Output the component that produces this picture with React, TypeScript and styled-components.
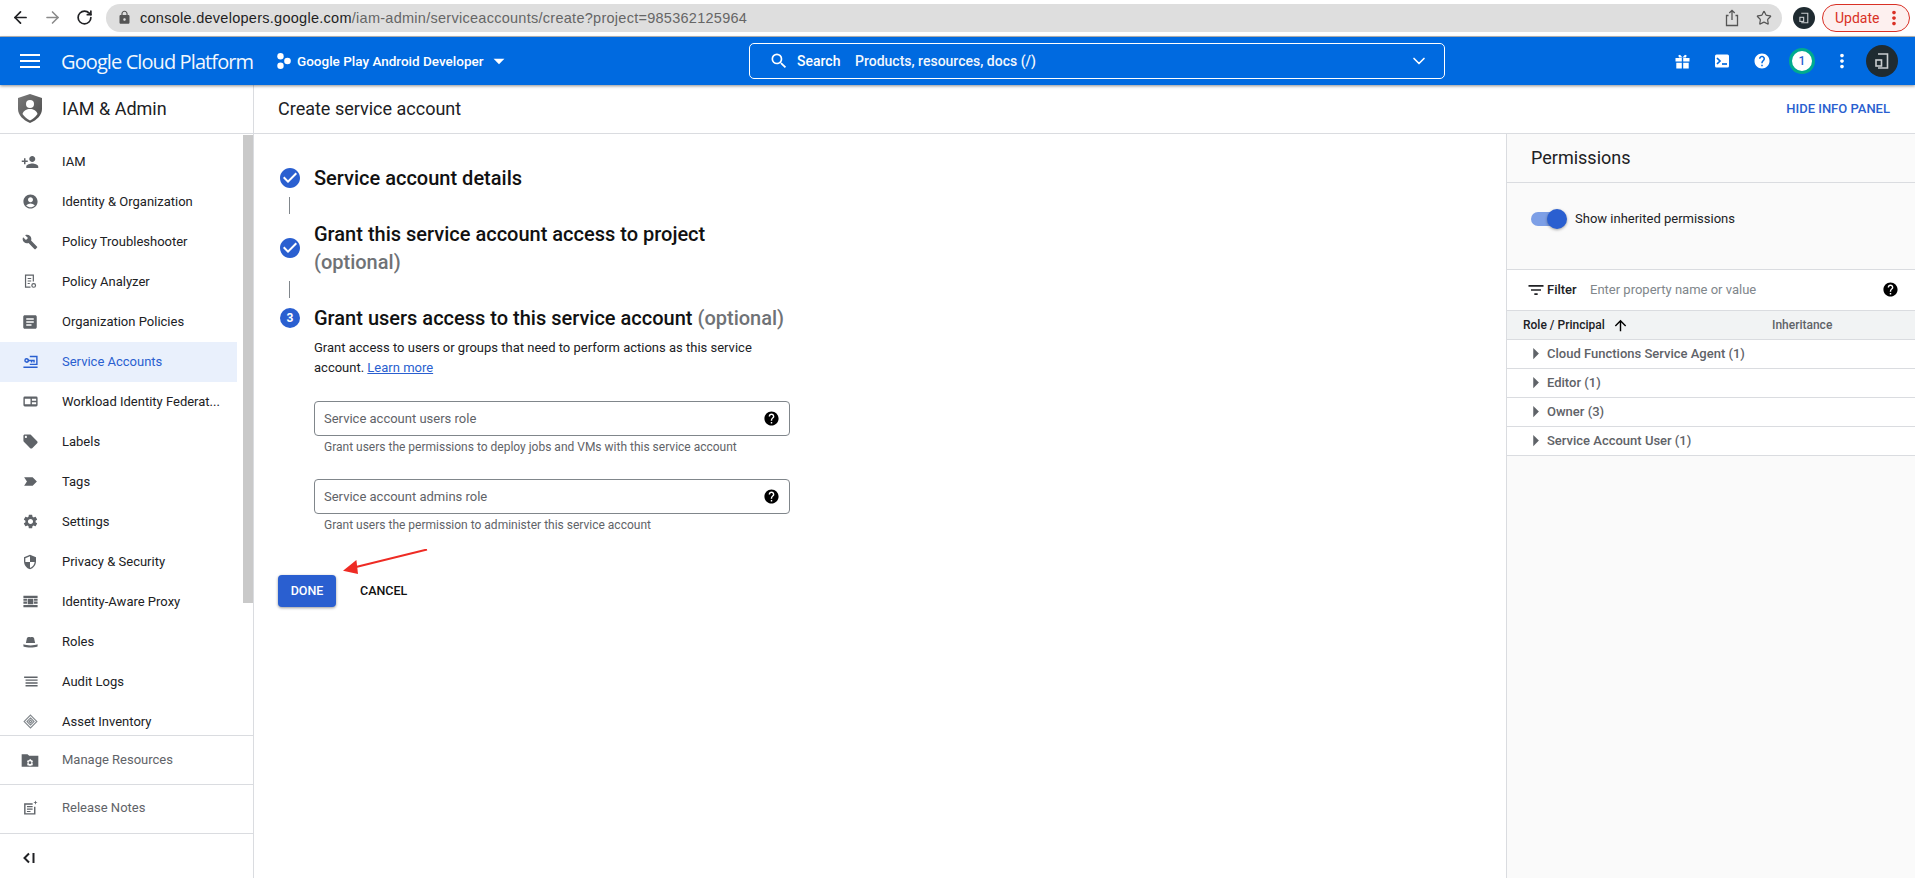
import React from 'react'
import styled, { createGlobalStyle } from 'styled-components'
import { ArrowLeft, ArrowRight, RotateCw, Star, ChevronDown } from 'lucide-react'
import {
  MdPersonAdd, MdAccountCircle, MdBuild, MdArticle, MdLocalOffer, MdSettings, MdSecurity,
  MdSearch, MdHelp, MdMoreVert, MdArrowDropDown, MdCheckCircle, MdFilterList,
  MdArrowUpward, MdArrowRight, MdLock,
} from 'react-icons/md'

const BLUE = '#2a5fd0'
const BAR = '#006ae0'

const GlobalStyle = createGlobalStyle`
  html, body { margin: 0; padding: 0; background: #fff; }
  body { font-family: Roboto, "Liberation Sans", sans-serif; color: #000; }
  * { box-sizing: border-box; }
`

const Page = styled.div`
  width: 1915px;
  height: 878px;
  display: flex;
  flex-direction: column;
  overflow: hidden;
`

/* browser chrome */
const Chrome = styled.div`
  height: 37px;
  flex: none;
  display: flex;
  align-items: center;
  padding: 0 5px 1px 4px;
  background: #fff;
  border-bottom: 1px solid #b9b9b9;
`
const NavBtn = styled.div<{ $dim?: boolean }>`
  width: 32px;
  display: flex;
  justify-content: center;
  color: ${p => (p.$dim ? '#8a8a8a' : '#202124')};
`
const UrlPill = styled.div`
  width: 1676px;
  height: 28px;
  margin-left: 6px;
  border-radius: 14px;
  background: #dedede;
  display: flex;
  align-items: center;
  padding: 0 2px 0 11px;
  color: #5b5b5b;
  font: 14.5px "Liberation Sans", Arial, sans-serif;
  letter-spacing: 0.27px;
`
const UrlText = styled.span`
  margin-left: 8px;
  flex: 1;
  color: #666;
  b { font-weight: 400; color: #1f1f1f; }
`
const PillIcon = styled.div`
  width: 32px;
  display: flex;
  justify-content: center;
  color: #555;
`
const ChromeAvatar = styled.div`
  width: 22px;
  height: 22px;
  margin-left: 11px;
  display: flex;
`
const UpdatePill = styled.div`
  width: 88px;
  height: 28px;
  margin-left: 7px;
  border: 1px solid #d93025;
  border-radius: 14px;
  background: #fdf0ef;
  color: #d93025;
  display: flex;
  align-items: center;
  justify-content: space-between;
  padding: 0 4px 0 12px;
  font: 14px Roboto, sans-serif;
`

/* blue console bar */
const TopBar = styled.header`
  height: 48px;
  flex: none;
  background: ${BAR};
  display: flex;
  align-items: center;
  color: #fff;
  position: relative;
  z-index: 2;
  box-shadow: 0 1px 3px rgba(0, 0, 0, 0.45);
`
const Burger = styled.div`
  width: 20px;
  height: 14px;
  margin-left: 20px;
  border-top: 2px solid #fff;
  border-bottom: 2px solid #fff;
  display: flex;
  align-items: center;
  &::before { content: ''; display: block; width: 100%; height: 2px; background: #fff; }
`
const Brand = styled.div`
  margin-left: 21px;
  width: 216px;
  font: 400 20px "Open Sans", Roboto, sans-serif;
  letter-spacing: -0.9px;
  color: #fff;
  opacity: 0.95;
`
const Project = styled.div`
  width: 260px;
  display: flex;
  align-items: center;
  font-size: 13.5px;
  font-weight: 500;
`
const ProjectDots = styled.svg`
  width: 14px;
  height: 16px;
  margin-right: 6px;
`
const DropCaret = styled.span`
  display: flex;
  margin-left: 2px;
`
const SearchBox = styled.div`
  width: 696px;
  height: 36px;
  margin-left: 212px;
  border: 1px solid #fff;
  border-radius: 5px;
  display: flex;
  align-items: center;
  padding: 0 15px 0 19px;
  font-size: 14px;
`
const SearchWord = styled.span`
  margin-left: 8px;
  width: 58px;
  font-weight: 500;
`
const SearchHint = styled.span`
  flex: 1;
  font-weight: 500;
  opacity: 0.95;
`
const TopIcons = styled.div`
  margin-left: 217px;
  display: flex;
  align-items: center;
`
const TopIcon = styled.div`
  width: 40px;
  display: flex;
  justify-content: center;
  align-items: center;
`
const Badge = styled.div`
  width: 26px;
  height: 26px;
  border-radius: 50%;
  background: #fff;
  border: 3px solid #00ab8e;
  color: ${BLUE};
  font-size: 12px;
  font-weight: 500;
  display: flex;
  align-items: center;
  justify-content: center;
`

/* body */
const Body = styled.div`
  flex: 1;
  min-height: 0;
  display: flex;
`
const Sidebar = styled.aside`
  width: 254px;
  flex: none;
  display: flex;
  flex-direction: column;
  border-right: 1px solid #dadce0;
`
const SideHead = styled.div`
  height: 49px;
  flex: none;
  display: flex;
  align-items: center;
  padding: 0 0 2px 18px;
  font-size: 18px;
  border-bottom: 1px solid #dadce0;
  color: #202124;
`
const SideTitle = styled.span`
  margin-left: 20px;
`
const NavArea = styled.div`
  flex: 1;
  min-height: 0;
  display: flex;
  overflow: hidden;
`
const NavList = styled.nav`
  width: 237px;
  flex: none;
  padding-top: 8px;
`
const NavRow = styled.div<{ $active?: boolean }>`
  height: 40px;
  display: flex;
  align-items: center;
  padding-bottom: 1px;
  font-size: 13px;
  color: ${p => (p.$active ? BLUE : '#202124')};
  background: ${p => (p.$active ? '#e9f0fc' : 'transparent')};
`
const NavIcon = styled.div`
  width: 62px;
  flex: none;
  padding: 0 22px 0 20px;
  display: flex;
  align-items: center;
  justify-content: center;
  svg { flex: none; }
`
const NavLabel = styled.span`
  white-space: nowrap;
`
const ScrollTrack = styled.div`
  width: 10px;
  margin: 1px 0 0 6px;
  height: 468px;
  background: #c9c9c9;
`
const FootRow = styled.div<{ $h: number; $pad: string }>`
  height: ${p => p.$h}px;
  flex: none;
  display: flex;
  align-items: center;
  padding: ${p => p.$pad};
  border-top: 1px solid #dadce0;
  font-size: 13px;
  color: #5f6368;
`
const Content = styled.div`
  flex: 1;
  min-width: 0;
  display: flex;
  flex-direction: column;
`
const SubHead = styled.div`
  height: 49px;
  flex: none;
  display: flex;
  align-items: center;
  justify-content: space-between;
  padding: 0 25px 2px 24px;
  border-bottom: 1px solid #dadce0;
`
const PageTitle = styled.h1`
  margin: 0;
  font-size: 18px;
  font-weight: 400;
  color: #202124;
`
const HideLink = styled.span`
  color: ${BLUE};
  font-size: 13px;
  font-weight: 500;
`
const Columns = styled.div`
  flex: 1;
  min-height: 0;
  display: flex;
`
const Main = styled.main`
  flex: 1;
  padding: 30px 0 0 24px;
`
const StepRow = styled.div`
  display: grid;
  grid-template-columns: 36px 1fr;
  align-items: center;
`
const StepTitle = styled.div`
  width: 476px;
  font-size: 20px;
  font-weight: 500;
  line-height: 28px;
  color: #111;
`
const Optional = styled.span`
  color: #6f7276;
`
const StepIcon = styled.div`
  width: 24px;
  height: 24px;
  display: flex;
  align-items: center;
  justify-content: center;
  color: ${BLUE};
`
const StepNumber = styled.div`
  width: 20px;
  height: 20px;
  border-radius: 50%;
  background: ${BLUE};
  color: #fff;
  font-size: 12px;
  font-weight: 700;
  display: flex;
  align-items: center;
  justify-content: center;
`
const Connector = styled.div`
  width: 1px;
  height: 17px;
  margin: 5px 0 6px 11px;
  background: #80868b;
`
const StepBody = styled.div`
  width: 476px;
  margin-left: 36px;
`
const Description = styled.p`
  margin: 6px 0 0;
  font-size: 13px;
  line-height: 20px;
  color: #202124;
`
const Learn = styled.a`
  color: ${BLUE};
  text-decoration: underline;
`
const Field = styled.div<{ $top: number }>`
  height: 35px;
  margin-top: ${p => p.$top}px;
  border: 1px solid #80868b;
  border-radius: 4px;
  display: flex;
  align-items: center;
  justify-content: space-between;
  padding: 0 9px 1px;
  font-size: 13px;
  color: #5f6368;
`
const Hint = styled.div`
  margin-top: 3px;
  padding-left: 10px;
  font-size: 12px;
  line-height: 16px;
  color: #5f6368;
`
const Actions = styled.div`
  margin-top: 42px;
  display: flex;
  gap: 8px;
  position: relative;
`
const PrimaryBtn = styled.button`
  width: 58px;
  height: 32px;
  border: 0;
  border-radius: 4px;
  background: ${BLUE};
  color: #fff;
  font: 500 12.5px Roboto, sans-serif;
  padding: 0 0 1px;
  box-shadow: 0 1px 3px rgba(0, 0, 0, 0.4);
`
const PlainBtn = styled.button`
  height: 32px;
  border: 0;
  background: none;
  color: #111;
  font: 500 12.5px Roboto, sans-serif;
  padding: 0 16px 1px;
`
const RedArrow = styled.svg`
  position: absolute;
  left: 65px;
  top: -26px;
  width: 86px;
  height: 30px;
`

/* info panel */
const Panel = styled.section`
  width: 409px;
  flex: none;
  border-left: 1px solid #dadce0;
  background: #fafafa;
`
const PanelHead = styled.div`
  height: 49px;
  display: flex;
  align-items: center;
  padding: 0 0 1px 24px;
  font-size: 18px;
  color: #202124;
  border-bottom: 1px solid #dadce0;
`
const ToggleRow = styled.div`
  height: 87px;
  display: flex;
  align-items: flex-start;
  padding: 26px 0 0 24px;
  font-size: 13px;
  color: #202124;
  border-bottom: 1px solid #dadce0;
`
const Toggle = styled.div`
  width: 36px;
  height: 20px;
  margin-right: 8px;
  display: flex;
  align-items: center;
  justify-content: flex-end;
  position: relative;
  &::before {
    content: '';
    position: absolute;
    left: 0;
    right: 2px;
    top: 3px;
    height: 14px;
    border-radius: 7px;
    background: #7d9fe6;
  }
  &::after {
    content: '';
    position: relative;
    width: 20px;
    height: 20px;
    border-radius: 50%;
    background: ${BLUE};
    box-shadow: 0 1px 3px rgba(0, 0, 0, 0.35);
  }
`
const ToggleText = styled.span`
  line-height: 20px;
`
const FilterRow = styled.div`
  height: 41px;
  background: #fff;
  display: flex;
  align-items: center;
  padding: 0 16px 1px 19px;
  font-size: 13px;
  border-bottom: 1px solid #dadce0;
`
const FilterWord = styled.span`
  width: 43px;
  margin-left: 1px;
  font-weight: 500;
  color: #202124;
`
const FilterHint = styled.span`
  flex: 1;
  color: #80868b;
`
const TableHead = styled.div`
  height: 29px;
  background: #f1f3f4;
  display: flex;
  align-items: center;
  padding-left: 16px;
  font-size: 12px;
  font-weight: 500;
  border-bottom: 1px solid #dadce0;
`
const HeadMain = styled.div`
  width: 249px;
  display: flex;
  align-items: center;
  gap: 7px;
  color: #202124;
`
const HeadSide = styled.div`
  color: #5f6368;
`
const TableRow = styled.div`
  height: 29px;
  background: #fff;
  display: flex;
  align-items: center;
  padding: 0 0 1px 20px;
  font-size: 13px;
  font-weight: 500;
  color: #5f6368;
  border-bottom: 1px solid #dadce0;
`
const Caret = styled.div`
  width: 20px;
  display: flex;
  align-items: center;
  justify-content: center;
  color: #5f6368;
  svg { flex: none; margin-left: -3px; }
`

const ICON = '#5f6368'

const Gi = ({ children, size = 17 }: { children: React.ReactNode; size?: number }) => (
  <svg width={size} height={size} viewBox="0 0 24 24" fill={ICON}>{children}</svg>
)

const DoorMark = ({ size }: { size: number }) => (
  <svg width={size} height={size} viewBox="0 0 32 32">
    <circle cx="16" cy="16" r="16" fill="#1f2b31" />
    <path d="M12 9h9.500v14H12" fill="none" stroke="#c9cdcf" strokeWidth="1.600" />
    <rect x="10" y="15" width="5.500" height="6" fill="none" stroke="#c9cdcf" strokeWidth="1.600" />
  </svg>
)

const navItems: { label: string; icon: React.ReactNode; active?: boolean }[] = [
  { label: 'IAM', icon: <MdPersonAdd size={18} color={ICON} /> },
  { label: 'Identity & Organization', icon: <MdAccountCircle size={17} color={ICON} /> },
  { label: 'Policy Troubleshooter', icon: <MdBuild size={16} color={ICON} /> },
  {
    label: 'Policy Analyzer',
    icon: (
      <Gi>
        <path fill="none" stroke={ICON} strokeWidth="1.700" d="M12 20H5V3h11v9" />
        <path d="M8 7h5v1.500H8zM8 10.500h5V12H8zM8 14h3v1.500H8z" />
        <circle cx="16.500" cy="17.500" r="2.600" fill="none" stroke={ICON} strokeWidth="1.700" />
      </Gi>
    ),
  },
  { label: 'Organization Policies', icon: <MdArticle size={18} color={ICON} /> },
  {
    label: 'Service Accounts',
    active: true,
    icon: (
      <Gi>
        <path fill={BLUE} d="M2 19h20v2H2zM11 4h11v13H11v-2h9V6h-9z" />
        <path fill={BLUE} d="M6.500 7A3.500 3.500 0 0 1 10 9.500h8v4h-2v-2h-1.500v2h-2v-2H10a3.500 3.500 0 1 1-3.500-4.500zm0 2.200a1.300 1.300 0 1 0 0 2.600 1.300 1.300 0 0 0 0-2.600z" />
      </Gi>
    ),
  },
  {
    label: 'Workload Identity Federat...',
    icon: <Gi><path fillRule="evenodd" d="M4 5h16a2 2 0 0 1 2 2v10a2 2 0 0 1-2 2H4a2 2 0 0 1-2-2V7a2 2 0 0 1 2-2zm0 3v8h8V8zm10 0v3h6V8zm0 5v3h6v-3z" /></Gi>,
  },
  { label: 'Labels', icon: <MdLocalOffer size={17} color={ICON} /> },
  { label: 'Tags', icon: <Gi><path d="M3 6h12l6 6-6 6H3l4-6z" /></Gi> },
  { label: 'Settings', icon: <MdSettings size={17} color={ICON} /> },
  { label: 'Privacy & Security', icon: <MdSecurity size={16} color={ICON} /> },
  {
    label: 'Identity-Aware Proxy',
    icon: <Gi><path d="M2 4h20v3H2zM2 8h5v3H2zM17 8h5v3h-5zM8 8h8v8H8zM2 12h5v3H2zM17 12h5v3h-5zM2 17h20v3H2z" /></Gi>,
  },
  {
    label: 'Roles',
    icon: <Gi><path d="M7 7c1.500-2 3.500-1 5-1s3.500-1 5 1l1.500 7h-13zM2 16c3 1 6 1.500 10 1.500S19 17 22 16v3c-3 1-6 1.500-10 1.500S5 20 2 19z" /></Gi>,
  },
  { label: 'Audit Logs', icon: <Gi><path d="M3 5h19v2H3zM5 9h17v2H5zM5 13h17v2H5zM5 17h17v2H5z" /></Gi> },
  {
    label: 'Asset Inventory',
    icon: (
      <svg width="17" height="17" viewBox="0 0 24 24" fill="none" stroke="#80868b" strokeWidth="1.500">
        <path d="M12 3l9 9-9 9-9-9zM12 7l5 5-5 5-5-5zM12 10l2 2-2 2-2-2z" />
      </svg>
    ),
  },
]

const Steps = () => (
  <>
    <StepRow>
      <StepIcon><MdCheckCircle size={24} /></StepIcon>
      <StepTitle>Service account details</StepTitle>
    </StepRow>
    <Connector />
    <StepRow>
      <StepIcon><MdCheckCircle size={24} /></StepIcon>
      <StepTitle>Grant this service account access to project <Optional>(optional)</Optional></StepTitle>
    </StepRow>
    <Connector />
    <StepRow>
      <StepIcon><StepNumber>3</StepNumber></StepIcon>
      <StepTitle>Grant users access to this service account <Optional>(optional)</Optional></StepTitle>
    </StepRow>
    <StepBody>
      <Description>
        Grant access to users or groups that need to perform actions as this service account. <Learn>Learn more</Learn>
      </Description>
      <Field $top={23}>Service account users role <MdHelp size={17} color="#000" /></Field>
      <Hint>Grant users the permissions to deploy jobs and VMs with this service account</Hint>
      <Field $top={24}>Service account admins role <MdHelp size={17} color="#000" /></Field>
      <Hint>Grant users the permission to administer this service account</Hint>
    </StepBody>
  </>
)

const App = () => {
  return (
    <Page>
      <GlobalStyle />
      <Chrome>
        <NavBtn><ArrowLeft size={19} strokeWidth={2.2} /></NavBtn>
        <NavBtn $dim><ArrowRight size={19} strokeWidth={2} /></NavBtn>
        <NavBtn><RotateCw size={17} strokeWidth={2.4} /></NavBtn>
        <UrlPill>
          <MdLock size={15} color="#555" />
          <UrlText><b>console.developers.google.com</b>/iam-admin/serviceaccounts/create?project=985362125964</UrlText>
          <PillIcon>
            <svg width="16" height="18" viewBox="0 0 16 18" fill="none" stroke="#555" strokeWidth="1.300">
              <path d="M4.500 6.500H2.500v10h11v-10h-2M8 11V1.500M5.300 4L8 1.300 10.700 4" />
            </svg>
          </PillIcon>
          <PillIcon><Star size={16} strokeWidth={1.800} /></PillIcon>
        </UrlPill>
        <ChromeAvatar><DoorMark size={22} /></ChromeAvatar>
        <UpdatePill>Update <MdMoreVert size={22} /></UpdatePill>
      </Chrome>

      <TopBar>
        <Burger />
        <Brand>Google Cloud Platform</Brand>
        <Project>
          <ProjectDots viewBox="0 0 14 16" fill="#fff">
            <circle cx="3.500" cy="3.300" r="3.200" />
            <circle cx="10.500" cy="8" r="3.300" />
            <circle cx="3.500" cy="12.700" r="3.200" />
          </ProjectDots>
          Google Play Android Developer
          <DropCaret><MdArrowDropDown size={26} /></DropCaret>
        </Project>
        <SearchBox>
          <MdSearch size={20} />
          <SearchWord>Search</SearchWord>
          <SearchHint>Products, resources, docs (/)</SearchHint>
          <ChevronDown size={20} strokeWidth={2} />
        </SearchBox>
        <TopIcons>
          <TopIcon>
            <svg width="15" height="15" viewBox="0 0 15 15" fill="#fff">
              <path d="M0.500 4h6.300v3.500H0.500zM8.200 4h6.300v3.500H8.200zM1.300 8.700h5.500V14.500H1.300zM8.200 8.700h5.500V14.500H8.200z" />
              <path d="M7.500 3.500L5 .8 3.300 1.500 4 3.500zM7.500 3.500L10 .8l1.700.7-.7 2z" />
            </svg>
          </TopIcon>
          <TopIcon>
            <svg width="16" height="16" viewBox="0 0 16 16">
              <rect width="14" height="13" x="1" y="1.500" rx="1.500" fill="#fff" />
              <path d="M3 5l3 3-3 3" fill="none" stroke={BAR} strokeWidth="1.700" />
              <path d="M8 11h5" stroke={BAR} strokeWidth="1.700" />
            </svg>
          </TopIcon>
          <TopIcon><MdHelp size={18} /></TopIcon>
          <TopIcon><Badge>1</Badge></TopIcon>
          <TopIcon><MdMoreVert size={22} /></TopIcon>
          <TopIcon><DoorMark size={32} /></TopIcon>
        </TopIcons>
      </TopBar>

      <Body>
        <Sidebar>
          <SideHead>
            <svg width="24" height="29" viewBox="0 0 24 29">
              <defs>
                <linearGradient id="sh" x1="0" x2="1" y1="0" y2="1">
                  <stop offset="0" stopColor="#7a7a7a" />
                  <stop offset="1" stopColor="#4c4c4c" />
                </linearGradient>
              </defs>
              <path d="M12 0l12 4v11c0 6-5 11-12 14C5 26 0 21 0 15V4z" fill="url(#sh)" />
              <circle cx="12" cy="10" r="4" fill="#fff" />
              <path d="M4.500 20c1-3.500 4-5 7.500-5s6.500 1.500 7.500 5c-2 3-4.500 5-7.500 6.500-3-1.500-5.500-3.500-7.500-6.500z" fill="#fff" />
            </svg>
            <SideTitle>IAM &amp; Admin</SideTitle>
          </SideHead>
          <NavArea>
            <NavList>
              {navItems.map(item => (
                <NavRow key={item.label} $active={item.active}>
                  <NavIcon>{item.icon}</NavIcon>
                  <NavLabel>{item.label}</NavLabel>
                </NavRow>
              ))}
            </NavList>
            <ScrollTrack />
          </NavArea>
          <FootRow $h={49} $pad="0 0 1px 0">
            <NavIcon>
              <Gi size={20}>
                <path fillRule="evenodd" d="M2 5h7l2 2h11v13H2zm10 5.500l-1 1.700H9.200L8.500 14l.9 1.400-.9 1.400.7 1.700h1.800l1 1 1-1h1.800l.7-1.700-.9-1.400.9-1.400-.7-1.800H14zm0 3a1.700 1.700 0 1 1 0 3.400 1.700 1.700 0 0 1 0-3.400z" />
              </Gi>
            </NavIcon>
            Manage Resources
          </FootRow>
          <FootRow $h={49} $pad="0 0 3px 0">
            <NavIcon>
              <Gi>
                <path fillRule="evenodd" d="M3 6h12v2H5v12h12V11h2v11H3zM7 10h8v1.500H7zM7 13.500h8V15H7zM7 17h5v1.500H7z" />
                <path d="M19 2l.8 2.200L22 5l-2.200.8L19 8l-.8-2.200L16 5l2.200-.8z" />
              </Gi>
            </NavIcon>
            Release Notes
          </FootRow>
          <FootRow $h={45} $pad="3px 0 0 0">
            <NavIcon>
              <svg width="14" height="12" viewBox="0 0 14 12" fill="none" stroke="#202124" strokeWidth="2">
                <path d="M6 1.500L1.500 6 6 10.500M10.500 1v10" />
              </svg>
            </NavIcon>
          </FootRow>
        </Sidebar>

        <Content>
          <SubHead>
            <PageTitle>Create service account</PageTitle>
            <HideLink>HIDE INFO PANEL</HideLink>
          </SubHead>
          <Columns>
            <Main>
              <Steps />
              <Actions>
                <PrimaryBtn>DONE</PrimaryBtn>
                <PlainBtn>CANCEL</PlainBtn>
                <RedArrow viewBox="0 0 86 30">
                  <path d="M84 .5L13 18" stroke="#ee2b24" strokeWidth="2" fill="none" />
                  <path d="M0 21.700L13.400 11 15 25z" fill="#ee2b24" />
                </RedArrow>
              </Actions>
            </Main>
            <Panel>
              <PanelHead>Permissions</PanelHead>
              <ToggleRow>
                <Toggle />
                <ToggleText>Show inherited permissions</ToggleText>
              </ToggleRow>
              <FilterRow>
                <MdFilterList size={20} color="#202124" />
                <FilterWord>Filter</FilterWord>
                <FilterHint>Enter property name or value</FilterHint>
                <MdHelp size={17} color="#000" />
              </FilterRow>
              <TableHead>
                <HeadMain>Role / Principal <MdArrowUpward size={17} color="#000" /></HeadMain>
                <HeadSide>Inheritance</HeadSide>
              </TableHead>
              {['Cloud Functions Service Agent (1)', 'Editor (1)', 'Owner (3)', 'Service Account User (1)'].map(role => (
                <TableRow key={role}>
                  <Caret><MdArrowRight size={27} /></Caret>
                  {role}
                </TableRow>
              ))}
            </Panel>
          </Columns>
        </Content>
      </Body>
    </Page>
  )
}

export default App
